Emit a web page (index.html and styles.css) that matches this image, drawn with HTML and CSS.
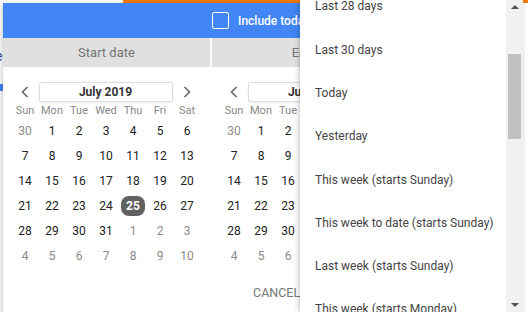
FILE: index.html
```html
<!DOCTYPE html>
<html lang="en">
  <head>
    <meta charset="UTF-8" />
    <meta name="viewport" content="width=device-width, initial-scale=1.0" />
    <title>Date range</title>
    <link rel="stylesheet" href="styles.css">
  </head>
  <body>
    <div class="page">
      <div class="top-bar"></div>
      <div class="side">
        <a class="side-link" href="#">e</a>
        <div class="side-block"></div>
      </div>
    </div>

    <div class="picker">
      <div class="picker-header">
        <label class="include-today">
          <span class="checkbox"></span>
          <span>Include today</span>
        </label>
      </div>

      <div class="tabs">
        <div class="tab">Start date</div>
        <div class="tab">End date</div>
      </div>

      <div class="panes">
        <div class="pane">
          <div class="month-nav">
            <span class="arrow"><svg width="8" height="12" viewBox="0 0 8 12"><path d="M6.5 1 L1.5 6 L6.5 11" /></svg></span>
            <div class="month-box">July 2019</div>
            <span class="arrow"><svg width="8" height="12" viewBox="0 0 8 12"><path d="M1.5 1 L6.5 6 L1.5 11" /></svg></span>
          </div>
          <div class="weekdays" id="weekdays1"></div>
          <div class="days" id="days1"></div>
        </div>
        <div class="pane">
          <div class="month-nav">
            <span class="arrow"><svg width="8" height="12" viewBox="0 0 8 12"><path d="M6.5 1 L1.5 6 L6.5 11" /></svg></span>
            <div class="month-box">July 2019</div>
            <span class="arrow"><svg width="8" height="12" viewBox="0 0 8 12"><path d="M1.5 1 L6.5 6 L1.5 11" /></svg></span>
          </div>
          <div class="weekdays" id="weekdays2"></div>
          <div class="days" id="days2"></div>
        </div>
      </div>

      <div class="footer">
        <div></div>
        <div class="buttons">
          <button class="btn cancel-btn">CANCEL</button>
          <button class="btn apply-btn">APPLY</button>
        </div>
      </div>
    </div>

    <div class="dropdown">
      <ul class="range-list">
        <li>Last 28 days</li>
        <li>Last 30 days</li>
        <li>Today</li>
        <li>Yesterday</li>
        <li>This week (starts Sunday)</li>
        <li>This week to date (starts Sunday)</li>
        <li>Last week (starts Sunday)</li>
        <li>This week (starts Monday)</li>
      </ul>
      <div class="scrollbar">
        <span class="scroll-up"></span>
        <div class="scroll-track"><div class="scroll-thumb"></div></div>
        <span class="scroll-down"></span>
      </div>
    </div>

    <script>
      document.addEventListener("DOMContentLoaded", function () {
        const names = ["Sun", "Mon", "Tue", "Wed", "Thu", "Fri", "Sat"];

        // Build a July 2019 month grid (starts Sunday June 30)
        function buildMonth(weekdaysId, daysId, selected) {
          let head = "";
          names.forEach((n) => {
            head += `<span>${n}</span>`;
          });
          document.getElementById(weekdaysId).innerHTML = head;

          let cells = "";
          cells += '<span class="other">30</span>';
          for (let d = 1; d <= 31; d++) {
            const cls = d === selected ? "day selected" : "day";
            cells += `<span class="${cls}">${d}</span>`;
          }
          for (let d = 1; d <= 10; d++) {
            cells += `<span class="other">${d}</span>`;
          }
          document.getElementById(daysId).innerHTML = cells;
        }

        buildMonth("weekdays1", "days1", 25);
        buildMonth("weekdays2", "days2", 0);
      });
    </script>
  </body>
</html>
```

FILE: styles.css
```css
body {
  font-family: Roboto, "Liberation Sans", sans-serif;
  margin: 0;
  background-color: #fff;
  color: #212121;
  width: 528px;
  height: 312px;
  overflow: hidden;
  position: relative;
}
.page {
  height: 312px;
}
.top-bar {
  margin-left: 123px;
  width: 405px;
  height: 3px;
  background-color: #f57c00;
}
.side {
  width: 3px;
  overflow: hidden;
}
.side-link {
  display: block;
  margin-top: 45px;
  font-size: 14px;
  color: #3f3fa8;
  text-decoration: none;
  line-height: 16px;
  margin-left: -5px;
}
.side-block {
  margin-top: 20px;
  height: 7px;
  background-color: #4285f4;
}

/* date picker popup, its right part sits under the dropdown */
.picker {
  position: absolute;
  left: 3px;
  top: 3px;
  width: 297px;
  height: 320px;
  overflow: hidden;
  background-color: #fff;
  box-shadow: 0 2px 6px rgba(0, 0, 0, 0.3);
}
.picker-header {
  height: 35px;
  background-color: #4285f4;
  display: flex;
  align-items: center;
  padding-left: 209px;
}
.include-today {
  display: flex;
  align-items: center;
  gap: 9px;
  color: #fff;
  font-size: 12px;
  font-weight: 500;
  white-space: nowrap;
}
.checkbox {
  flex: none;
  width: 15px;
  height: 15px;
  border: 1.5px solid #fff;
  border-radius: 2px;
}
.tabs {
  display: grid;
  grid-template-columns: 207px 210px;
  gap: 2px;
}
.tab {
  height: 29px;
  line-height: 29px;
  background-color: #e0e0e0;
  color: #757575;
  font-size: 13px;
  text-align: center;
}
.panes {
  display: grid;
  grid-template-columns: 209px 209px;
}
.pane {
  padding: 15px 0 0 8.5px;
}
.month-nav {
  display: flex;
  align-items: center;
  height: 19px;
}
.arrow {
  flex: none;
  width: 16px;
  margin-left: 5px;
  display: flex;
  justify-content: center;
}
.arrow:last-child {
  margin-left: 6px;
}
.arrow svg path {
  fill: none;
  stroke: #666;
  stroke-width: 1.6;
}
.month-box {
  flex: none;
  width: 132px;
  height: 18px;
  margin-left: 6px;
  border: 1px solid #ddd;
  border-radius: 2px;
  box-shadow: 0 1px 2px rgba(0, 0, 0, 0.08);
  text-align: center;
  line-height: 18px;
  font-size: 12px;
  font-weight: 700;
  color: #333;
}
.weekdays {
  display: grid;
  grid-template-columns: repeat(7, 27px);
  margin-top: 3px;
  height: 14px;
  line-height: 14px;
  font-size: 11px;
  color: #888;
  text-align: center;
}
.days {
  display: grid;
  grid-template-columns: repeat(7, 27px);
  grid-auto-rows: 25px;
  font-size: 12px;
  text-align: center;
}
.days span {
  display: flex;
  align-items: center;
  justify-content: center;
}
.days .other {
  color: #8a8a8a;
}
.days .selected {
  background-color: #616161;
  color: #fff;
  font-weight: 700;
  border-radius: 8px;
  margin: 2.5px 1.5px;
}
.footer {
  display: grid;
  grid-template-columns: 209px 209px;
  margin-top: 12px;
}
.buttons {
  display: flex;
  gap: 24px;
  padding-left: 41px;
}
.btn {
  border: none;
  background: none;
  padding: 0;
  height: 24px;
  font-family: inherit;
  font-size: 12.5px;
  color: #757575;
}
.apply-btn {
  color: #4285f4;
  font-weight: 500;
}

/* preset range dropdown */
.dropdown {
  position: absolute;
  left: 300px;
  top: 0;
  width: 223px;
  height: 312px;
  background-color: #fff;
  box-shadow: -1px 0 5px rgba(0, 0, 0, 0.25);
  display: flex;
  overflow: hidden;
}
.range-list {
  list-style: none;
  margin: -14.6px 0 0 0;
  padding: 0;
  flex: 1;
}
.range-list li {
  height: 43.3px;
  line-height: 43.3px;
  padding-left: 15px;
  font-size: 12px;
  color: #444;
  white-space: nowrap;
}
.scrollbar {
  width: 17px;
  background-color: #f1f1f1;
  display: flex;
  flex-direction: column;
}
.scroll-up,
.scroll-down {
  height: 14px;
  display: flex;
  align-items: center;
  justify-content: center;
}
.scroll-up::before,
.scroll-down::before {
  content: "";
  border-left: 4px solid transparent;
  border-right: 4px solid transparent;
}
.scroll-up::before {
  border-bottom: 4px solid #505050;
}
.scroll-down::before {
  border-top: 4px solid #505050;
}
.scroll-track {
  flex: 1;
  padding: 40px 2px 0;
}
.scroll-thumb {
  height: 85px;
  background-color: #c1c1c1;
}
```
